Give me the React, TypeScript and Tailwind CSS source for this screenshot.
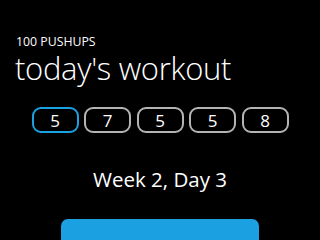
import React from "react";

export default function App() {
  const reps = [5, 7, 5, 5, 8];
  return (
    <div
      className="w-[320px] h-[240px] bg-black text-white overflow-hidden flex flex-col"
      style={{ fontFamily: '"Open Sans", "Noto Sans", sans-serif' }}
    >
      <div className="pl-4 pt-[35px] text-[12.3px] leading-[14px]">100 PUSHUPS</div>
      <div className="pl-[15px] mt-[1px] text-[31px] leading-[36px] font-light tracking-[-0.3px]">today's workout</div>
      <div className="flex justify-center gap-[5.5px] mt-[21px]">
        {reps.map((r, i) => (
          <div
            key={i}
            className={`w-[47px] h-[26px] rounded-[9px] border-[2.5px] flex items-center justify-center text-[17px] leading-none font-medium ${
              i === 0 ? "border-[#1ba1e2]" : "border-[#b4b4b4]"
            }`}
          >
            {r}
          </div>
        ))}
      </div>
      <div className="mt-[33px] text-center text-[20.5px] leading-[26px]">Week 2, Day 3</div>
      <div className="flex justify-center mt-[27px]">
        <div className="w-[198px] h-[40px] rounded-[7px] bg-[#1ba1e2]" />
      </div>
    </div>
  );
}
